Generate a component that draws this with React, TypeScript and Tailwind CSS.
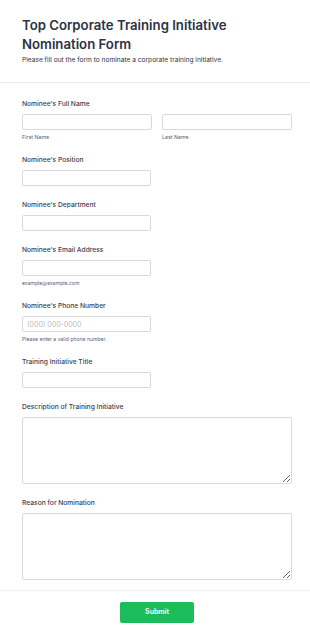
import React from "react";

interface Field {
  label: string;
  kind: "input" | "name" | "textarea";
  placeholder?: string;
  hint?: string;
}

const fields: Field[] = [
  { label: "Nominee's Full Name", kind: "name" },
  { label: "Nominee's Position", kind: "input" },
  { label: "Nominee's Department", kind: "input" },
  { label: "Nominee's Email Address", kind: "input", hint: "example@example.com" },
  {
    label: "Nominee's Phone Number",
    kind: "input",
    placeholder: "(000) 000-0000",
    hint: "Please enter a valid phone number.",
  },
  { label: "Training Initiative Title", kind: "input" },
  { label: "Description of Training Initiative", kind: "textarea" },
  { label: "Reason for Nomination", kind: "textarea" },
];

const inputCls =
  "block h-[16px] rounded-[2px] border border-[#d8dae0] bg-white px-[4px] text-[7px] text-[#2c3345] placeholder:text-[#b7bcc6] outline-none";

const App: React.FC = () => {
  return (
    <div
      className="min-h-[639px] w-[310px] bg-white text-[#2c3345]"
      style={{ fontFamily: "Inter, 'Noto Sans', sans-serif" }}
    >
      {/* Header */}
      <div className="border-b border-[#ebecef] px-[22px] pt-[16px] pb-[18px]">
        <h1 className="m-0 text-[13.2px] font-semibold leading-[19px] text-[#2c3345]">
          Top Corporate Training Initiative Nomination Form
        </h1>
        <p className="m-0 mt-[2px] text-[6.6px] leading-[8px] text-[#2c3345]">
          Please fill out the form to nominate a corporate training initiative.
        </p>
      </div>

      {/* Fields */}
      <div className="flex flex-col gap-[14px] pl-[22px] pr-[18px] pt-[16px] pb-[10px]">
        {fields.map((f) => (
          <div key={f.label}>
            <label className="block h-[10px] text-[6.7px] font-medium leading-[10px] text-[#3a4254]">
              {f.label}
            </label>
            <div className="mt-[5px]">
              {f.kind === "name" && (
                <div className="flex gap-[10px]">
                  <div className="w-[130px]">
                    <input className={`${inputCls} w-full`} />
                    <span className="mt-[3px] block text-[5.3px] leading-[8px] text-[#57647e]">
                      First Name
                    </span>
                  </div>
                  <div className="w-[130px]">
                    <input className={`${inputCls} w-full`} />
                    <span className="mt-[3px] block text-[5.3px] leading-[8px] text-[#57647e]">
                      Last Name
                    </span>
                  </div>
                </div>
              )}
              {f.kind === "input" && (
                <input
                  className={`${inputCls} w-[129px]`}
                  placeholder={f.placeholder}
                />
              )}
              {f.kind === "textarea" && (
                <textarea className="block h-[67px] w-[270px] rounded-[2px] border border-[#d8dae0] bg-white p-[4px] text-[7px] outline-none" />
              )}
              {f.hint && (
                <span className="mt-[3px] block text-[5.1px] leading-[8px] text-[#57647e]">
                  {f.hint}
                </span>
              )}
            </div>
          </div>
        ))}
      </div>

      {/* Footer */}
      <div className="flex justify-center border-t border-[#f0f1f3] pl-[4px] pt-[11px] pb-[17px]">
        <button className="h-[21px] w-[74px] rounded-[2px] bg-[#1bbd5b] text-[7px] font-semibold text-white">
          Submit
        </button>
      </div>
    </div>
  );
};

export default App;
